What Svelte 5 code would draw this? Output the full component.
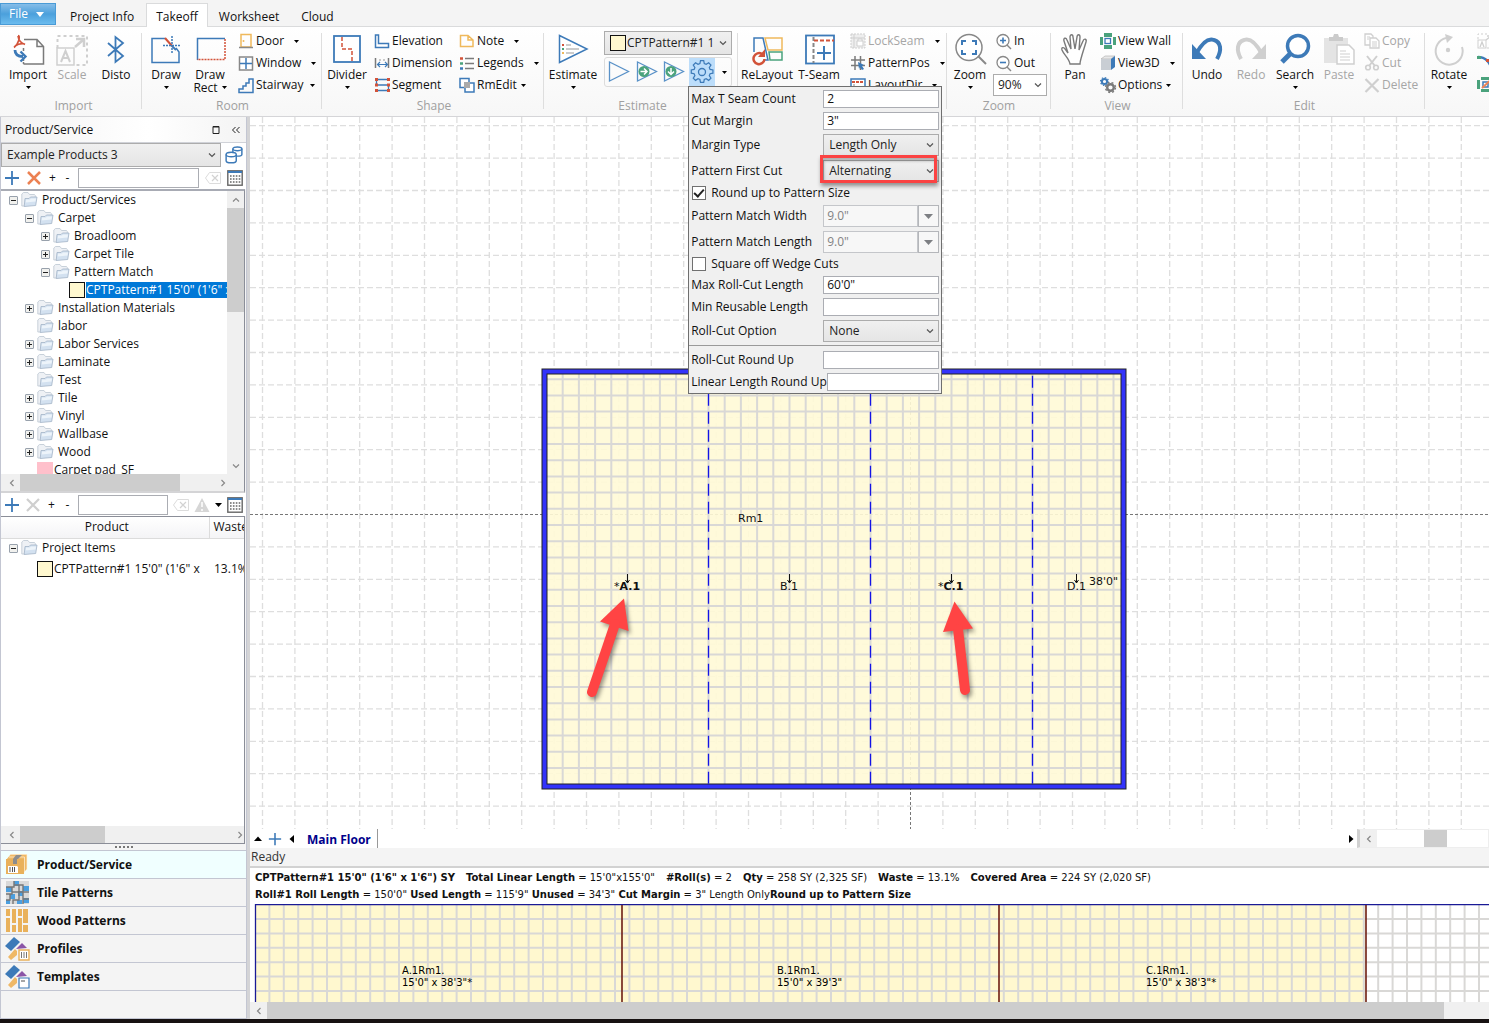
<script>
  const tabs = ['Project Info', 'Takeoff', 'Worksheet', 'Cloud'];

  const B = '#3d7ab8';
  const R = '#d2533a';
  const G = '#4aa27c';
  const O = '#efb95c';
  const K = '#7a7a7a';
  const L = '#cfcfcf';

  const icons = {
    import: `<path d="M12 5.500H25l6.500 7V30H11.500M25 5.500v7h6.500" fill="#fff" stroke="${K}" stroke-width="1.500"/><path d="M11.500 14v3M11.500 24v6" stroke="${K}" stroke-width="1.500" stroke-dasharray="3 1"/><path d="M6 1.500c1.500 0 1.500 2 .7 5S4.500 11.500 2 13.500M6 2c.5 4 3 7 7 8.500M3 12c3-2 6-3 10-2" fill="none" stroke="${R}" stroke-width="1.700"/><path d="M3 16c0 5 3 6.500 8 6.500" fill="none" stroke="${B}" stroke-width="2.800"/><path d="M8.500 17.500l5 5-5 5" fill="none" stroke="${B}" stroke-width="2.400"/>`,
    scale: `<path d="M1.500 14V2H31v29H20" fill="none" stroke="${L}" stroke-width="2" stroke-dasharray="3 3"/><rect x="1" y="14" width="17" height="17" fill="none" stroke="${L}" stroke-width="1.500"/><path d="M5 28l4.500-11L14 28M6.500 24h6" fill="none" stroke="${L}" stroke-width="2"/><path d="M19 13l8-7M20 5h8v8" fill="none" stroke="${L}" stroke-width="2.500"/>`,
    disto: `<path d="M8 9l15 13-7.500 6V3l7.500 6L8 22" fill="none" stroke="${B}" stroke-width="1.800"/>`,
    draw: `<path d="M15 4.500H2v24h27V18l-3-4" fill="none" stroke="${B}" stroke-width="1.500"/><path d="M15 4l7 8" stroke="${R}" stroke-width="2"/><path d="M22 12l4 4" stroke="${B}" stroke-width="2"/><path d="M22 2v18M13 11.500h18" stroke="${B}" stroke-width="1.500" stroke-dasharray="2 1"/>`,
    drawrect: `<path d="M31 4.500H3.500V26" fill="none" stroke="${B}" stroke-width="1.500"/><path d="M31 5v20.500H3" fill="none" stroke="${R}" stroke-width="1.500" stroke-dasharray="2 1"/>`,
    divider: `<rect x="3" y="2" width="26" height="26" fill="#fff" stroke="${B}" stroke-width="1.800"/><path d="M11 3v12h10v13" fill="none" stroke="${R}" stroke-width="1.500" stroke-dasharray="4 2"/>`,
    estimate: `<path d="M2.500 1.500v27L30 15z" fill="#fff" stroke="${B}" stroke-width="1.500"/><path d="M9 11h5M9 15h13M9 19h8" stroke="#999" stroke-width="1.200"/><path d="M5 11h2" stroke="${R}" stroke-width="2"/><path d="M5 15h2" stroke="${G}" stroke-width="2"/><path d="M5 19h2" stroke="${O}" stroke-width="2"/>`,
    relayout: `<path d="M3 18V4h9l5 22h-3" fill="none" stroke="${B}" stroke-width="1.500"/><path d="M14 4h17v12H17z" fill="none" stroke="${O}" stroke-width="1.500"/><path d="M18 18h13v8H19z" fill="none" stroke="${G}" stroke-width="1.500"/><path d="M11 20a5.500 5.500 0 1 0 2.500 5" fill="none" stroke="${R}" stroke-width="2.500"/><path d="M14 15v8H7z" fill="${R}"/>`,
    tseam: `<rect x="3" y="1.500" width="28" height="28" fill="#fff" stroke="${B}" stroke-width="1.800"/><path d="M10.500 3v26" stroke="#888" stroke-width="2" stroke-dasharray="4 2"/><path d="M11 6.500h20" stroke="${R}" stroke-width="2" stroke-dasharray="4 2"/><path d="M21 12v14M14 19h14" stroke="${B}" stroke-width="2"/>`,
    zoom: `<circle cx="15" cy="13.500" r="13" fill="#fff" stroke="#888" stroke-width="1.500"/><path d="M24 22l8 8" stroke="#888" stroke-width="2"/><path d="M8 11V7h4M18 7h4v4M22 16v4h-4M12 20H8v-4" fill="none" stroke="${B}" stroke-width="2"/>`,
    pan: `<path d="M11 30c-1-6-6-9-8-14-1-3 2-3 3-1l3 4L5 7c-1-3 2-4 3-1l4 9-1-12c0-3 3-3 3 0l2 12 2-12c0-3 3-3 3 0l-1 13 4-9c1-3 4-2 3 1l-4 13c-1 4-2 6-2 9z" fill="#fff" stroke="${K}" stroke-width="1.400"/>`,
    undo: `<path d="M5 20C12 7 18 4 23 6c7 2 8 10 3 19" fill="none" stroke="${B}" stroke-width="4"/><path d="M1 10v15h14z" fill="${B}"/>`,
    redo: `<path d="M27 20C20 7 14 4 9 6c-7 2-8 10-3 19" fill="none" stroke="${L}" stroke-width="4"/><path d="M31 10v15H17z" fill="${L}"/>`,
    search: `<circle cx="19" cy="12" r="10.500" fill="#fff" stroke="${B}" stroke-width="3.500"/><path d="M11 20l-8 8" stroke="${B}" stroke-width="5"/>`,
    paste: `<path d="M1 4h24v25H1z" fill="#e4e4e4"/><path d="M6 7V3h4l1-3h4l1 3h4v4z" fill="#cbcbcb"/><path d="M14 11h12l5 5v14H14z" fill="#fff" stroke="${L}" stroke-width="1.500"/><path d="M17 17h6M17 20h10M17 23h10M17 26h10" stroke="${L}"/>`,
    rotate: `<path d="M13 4a13.500 13.500 0 1 0 16 9" fill="none" stroke="${L}" stroke-width="2"/><path d="M12 0l8 3-6 6z" fill="${L}"/><circle cx="15" cy="16" r="2.200" fill="${L}"/>`,
    door: `<path d="M3 1.500h10V14H3z" fill="none" stroke="${O}" stroke-width="1.500"/><path d="M1 14.500h14" stroke="#888" stroke-width="1.500"/><circle cx="5.500" cy="8" r="1" fill="${O}"/>`,
    window: `<rect x="1.500" y="2" width="13" height="13" fill="#fff" stroke="#888" stroke-width="1.500"/><path d="M8 3v11M2 8.500h12" stroke="${B}" stroke-width="1.500"/>`,
    stairway: `<path d="M1 15.500V12h4V9h3V6h3V2h4v13.500z" fill="none" stroke="${B}" stroke-width="1.500"/>`,
    elevation: `<path d="M1.500 2h3v8.500h10v4h-13z" fill="#fff" stroke="${B}" stroke-width="1.500"/>`,
    dimension: `<path d="M1.500 3v10M14.500 3v10" stroke="${K}" stroke-width="1.500"/><path d="M4 9.500h9M6 7l-2.500 2.500L6 12M11 7l2.500 2.500L11 12" fill="none" stroke="${B}" stroke-width="1.200"/><path d="M5 5h2M9 5h2" stroke="#999"/>`,
    segment: `<path d="M14.500 2.500H2.500v5.500h12v5.500H1" fill="none" stroke="${B}" stroke-width="1.300"/><path d="M1 1h3v3H1zM13 1h3v3h-3zM1 6.500h3v3H1zM13 6.500h3v3h-3zM1 12h3v3H1zM13 12h3v3h-3z" fill="${R}"/>`,
    note: `<path d="M1.500 2.500H9l5 4.500v6.500H1.500zM9 2.500V7h5" fill="none" stroke="${O}" stroke-width="1.500"/>`,
    legends: `<path d="M6 3.500h9M6 8.500h9M6 13.500h9" stroke="${K}" stroke-width="1.500"/><path d="M1 3.500h3" stroke="${R}" stroke-width="2.500"/><path d="M1 8.500h3" stroke="${G}" stroke-width="2.500"/><path d="M1 13.500h3" stroke="${B}" stroke-width="2.500"/>`,
    rmedit: `<rect x="1" y="1.500" width="9" height="9" fill="#fff" stroke="${B}" stroke-width="1.500"/><rect x="6" y="6" width="9" height="9" fill="#fff" stroke="${B}" stroke-width="1.500"/><rect x="5" y="5" width="6" height="6" fill="#aaa"/>`,
    lockseam: `<path d="M1 1h14v14H1z" fill="#eee" stroke="${L}" stroke-dasharray="2 1"/><path d="M4 1v14M1 5h14" stroke="${L}"/><path d="M7 8h6v5H7zM8 8V6h4v2" fill="#fff" stroke="${L}"/>`,
    patternpos: `<path d="M5 1v14M10.500 1v14M1 5h14M1 10.500h14" stroke="${K}" stroke-width="1.500"/><path d="M8 7l6 3-2 1 2 3-2 1-2-3-1 2z" fill="${B}"/>`,
    layoutdir: `<rect x="1" y="2" width="14" height="13" fill="#fff" stroke="${B}" stroke-width="1.500"/><path d="M2 5h12" stroke="${R}" stroke-width="2" stroke-dasharray="3 1"/><path d="M4 7v8" stroke="#888" stroke-dasharray="2 1"/>`,
    zin: `<circle cx="7" cy="7.500" r="6" fill="#fff" stroke="#888" stroke-width="1.300"/><path d="M11 12l4 4" stroke="#888" stroke-width="1.500"/><path d="M4 7.500h6M7 4.500v6" stroke="${B}" stroke-width="1.600"/>`,
    zout: `<circle cx="7" cy="7.500" r="6" fill="#fff" stroke="#888" stroke-width="1.300"/><path d="M11 12l4 4" stroke="#888" stroke-width="1.500"/><path d="M4 7.500h6" stroke="${B}" stroke-width="1.600"/>`,
    viewwall: `<path d="M4 0h8v4H4zM4 12h8v4H4zM0 4h3v8H0zM13 4h3v8h-3z" fill="${G}"/><rect x="5" y="5.500" width="5.500" height="5" fill="#fff" stroke="${B}" stroke-width="1.300"/>`,
    view3d: `<path d="M1 4l4-3h10l-4 3z" fill="#e8e8e8" stroke="#aaa" stroke-width=".6"/><path d="M1 4h10v11H1z" fill="#c9ced4"/><path d="M11 4l4-3v11l-4 3z" fill="${B}"/>`,
    options: `<circle cx="4.500" cy="4.500" r="2.600" fill="none" stroke="${B}" stroke-width="2"/><circle cx="4.500" cy="4.500" r="4" fill="none" stroke="${B}" stroke-width="1.200" stroke-dasharray="1.500 1.600"/><circle cx="10.500" cy="10.500" r="3.300" fill="none" stroke="${K}" stroke-width="2.400"/><circle cx="10.500" cy="10.500" r="5" fill="none" stroke="${K}" stroke-width="1.400" stroke-dasharray="2 2"/>`,
    copy: `<path d="M1 1h6l2 2v9H1z" fill="#fff" stroke="${L}" stroke-width="1.300"/><path d="M6 5h6l3 3v7H6z" fill="#fff" stroke="${L}" stroke-width="1.300"/><path d="M8 9h5M8 11h5M8 13h5M3 4h3M3 6h2" stroke="${L}"/>`,
    cut: `<path d="M3 1l8 10M13 1L5 11" stroke="${L}" stroke-width="2"/><circle cx="4" cy="12.500" r="2.300" fill="none" stroke="${L}" stroke-width="1.600"/><circle cx="12" cy="12.500" r="2.300" fill="none" stroke="${L}" stroke-width="1.600"/>`,
    del: `<path d="M1.500 2l13 13M14.500 2l-13 13" stroke="${L}" stroke-width="2.200"/>`,
    resize: `<path d="M1 6V1h14v14h-5" fill="none" stroke="${L}" stroke-dasharray="2 2"/><rect x="1" y="7" width="8" height="8" fill="#fff" stroke="${L}"/><path d="M3 14l2-5 2 5M9 7l5-4M10 3h4v4" fill="none" stroke="${L}" stroke-width="1.300"/>`,
    arc: `<path d="M1 2c7 0 13 5 13 13" fill="none" stroke="${B}" stroke-width="2.500"/><path d="M0 1h4v3H0z" fill="${G}"/><path d="M9 4h3v3H9z" fill="${R}"/>`,
    wallcut: `<path d="M4 0h8v3H4zM4 12h8v3H4zM0 3h3v9H0z" fill="${G}"/><rect x="6" y="5" width="5" height="5" fill="#fff" stroke="${B}" stroke-width="1.500"/><path d="M5 11L15 2" stroke="#ef8354" stroke-width="2"/>`,
    folder: `<path d="M.8 14V2l1.700-1.500h4.500L8.500 2.500h5l.8 1V6L4 14z" fill="#eef1f5" stroke="#bcc6d2" stroke-width=".8"/><path d="M4 6.500h4L9.500 5H16l-1.300 8.500-11.500 1z" fill="#d3e1f0" stroke="#a3b4c7" stroke-width=".8"/><path d="M5 7.500h4l1-1h5l-.5 3C11 10 8 10 4.700 10.500z" fill="#edf4fa"/>`,
    plus: `<path d="M8 1v14M1 8h14" stroke="${B}" stroke-width="1.800"/>`,
    cross: `<path d="M2 2l12 12M14 2L2 14" stroke="#ec8152" stroke-width="2.500"/>`,
    crossoff: `<path d="M2 2l12 12M14 2L2 14" stroke="${L}" stroke-width="2.200"/>`,
    clear: `<path d="M.5 8l4-5.500h11v11h-11z" fill="none" stroke="#dcdcdc"/><path d="M7 5l6 6M13 5l-6 6" stroke="#d2d2d2" stroke-width="1.200"/>`,
    grid: `<rect x=".8" y=".8" width="14.400" height="14.400" fill="#fff" stroke="#666" stroke-width="1.400"/><path d="M1 2h14" stroke="${B}" stroke-width="2"/><path d="M3 6h10.500M3 9h10.500M3 12h10.500" stroke="#666" stroke-width="1.600" stroke-dasharray="1.600 1.300"/>`,
    warn: `<path d="M8 1l7.500 14H.5z" fill="#d6d6d6"/><path d="M8 5v5M8 12v2" stroke="#fff" stroke-width="1.500"/>`,
    products: `<path d="M7 2.500v5c0 2 8 2 8 0v-5" fill="#fff" stroke="${B}" stroke-width="1.300"/><ellipse cx="11" cy="2.500" rx="4" ry="1.700" fill="#fff" stroke="${B}" stroke-width="1.300"/><path d="M1 7.500v5.500c0 2.500 9 2.500 9 0V7.500" fill="#fff" stroke="${B}" stroke-width="1.300"/><ellipse cx="5.500" cy="7.500" rx="4.500" ry="2" fill="#fff" stroke="${B}" stroke-width="1.300"/>`,
    gear: `<circle cx="12" cy="12" r="3.500" fill="none" stroke="${B}" stroke-width="1.300"/><path d="M10.300 1.500h3.400l.6 3 2 .8 2.600-1.700 2.400 2.400-1.700 2.600.8 2 3 .6v3.400l-3 .6-.8 2 1.700 2.600-2.400 2.400-2.600-1.700-2 .8-.6 3h-3.400l-.6-3-2-.8-2.600 1.700-2.400-2.400 1.700-2.600-.8-2-3-.6v-3.400l3-.6.8-2L2.700 6l2.400-2.400 2.600 1.700 2-.8z" fill="none" stroke="${B}" stroke-width="1.300" transform="translate(.7 -.7) scale(.95)"/>`,
    run: `<path d="M2.500 2v19L21.500 11.500z" fill="none" stroke="#5a92c8" stroke-width="1.300"/>`,
    runright: `<path d="M2.500 2v19L21.500 11.500z" fill="none" stroke="#5a92c8" stroke-width="1.300"/><circle cx="9" cy="11.500" r="5.500" fill="${G}"/><path d="M5.500 11.500h6M9 8.500l3 3-3 3" fill="none" stroke="#fff" stroke-width="1.500"/>`,
    rundown: `<path d="M2.500 2v19L21.500 11.500z" fill="none" stroke="#5a92c8" stroke-width="1.300"/><circle cx="9" cy="11.500" r="5.500" fill="${G}"/><path d="M9 8v6M6 11.500l3 3 3-3" fill="none" stroke="#fff" stroke-width="1.500"/>`,
    box: `<path d="M6 1h16v15l-3 3H1V7z" fill="#efb866"/><path d="M5.500 1.500H22V17M4 4h15.500v15.500" fill="none" stroke="#fff3dc" stroke-width=".7"/><rect x="1" y="6" width="18" height="15" fill="#e9b15b"/><path d="M8 6h4v5H8zM11 2h6l-4 4H8z" fill="#8d8d8d"/><path d="M3 13h9l1 1v6H3z" fill="#fff"/><path d="M5 14v5M7.500 14v5M9.500 14v5" stroke="#555"/>`,
    tiles: `<rect width="23" height="23" x="1" fill="#d9d9d9"/><path d="M1 6h6v5H1zM9 0h5v5H9zM18 5h6v5h-6zM13 10h5v5h-5zM5 13h5v5H5zM18 17h6v5h-6zM12 19h5v4h-5zM1 19h4v4H1z" fill="#4b9fe0"/><path d="M1 6h8V0M9 4h9v7h6M7 6v7H1M7 11h7v-7M14 11h4v7h6M14 11v8H8v4M5 13v6H1M18 18v5" fill="none" stroke="#777" stroke-width="1.400"/>`,
    wood: `<path d="M1 0h4v7H1zM1 9h4v14H1zM7 0h4v14H7zM7 16h4v7H7zM13 0h4v7h-4zM13 9h4v14h-4zM18 0h5v14h-5zM18 16h5v7h-5z" fill="#e9b15b"/>`,
    profiles: `<path d="M0 9L9 0l6 5-9 9z" fill="${B}"/><path d="M11 12l6-6 5 5z" fill="#8b55a6"/><path d="M3 20l7-8 2 2v4l-6 5z" fill="#efb866"/><path d="M14 13h10v10H14z" fill="#fff" stroke="#e9b15b" stroke-width="1.400"/><path d="M16.500 15v6M19 15v6M21.500 15v6" stroke="#777"/>`,
    templates: `<path d="M0 9L9 0l6 5-9 9z" fill="${B}"/><path d="M11 12l6-6 5 5z" fill="#8b55a6"/><path d="M3 20l7-8 2 2v4l-6 5z" fill="#efb866"/><path d="M14 13h10v10H14z" fill="#fff" stroke="${B}" stroke-width="1.200"/><path d="M16 16h4" stroke="#888" stroke-width="1.500"/>`
  };

  const tree = [
    { level: 0, open: true, text: 'Product/Services' },
    { level: 1, open: true, text: 'Carpet' },
    { level: 2, open: false, text: 'Broadloom' },
    { level: 2, open: false, text: 'Carpet Tile' },
    { level: 2, open: true, text: 'Pattern Match' },
    { level: 3, item: 'cream', selected: true, text: `CPTPattern#1 15'0" (1'6" x` },
    { level: 1, open: false, text: 'Installation Materials' },
    { level: 1, text: 'labor' },
    { level: 1, open: false, text: 'Labor Services' },
    { level: 1, open: false, text: 'Laminate' },
    { level: 1, text: 'Test' },
    { level: 1, open: false, text: 'Tile' },
    { level: 1, open: false, text: 'Vinyl' },
    { level: 1, open: false, text: 'Wallbase' },
    { level: 1, open: false, text: 'Wood' },
    { level: 1, item: 'pink', text: 'Carpet pad_SF' }
  ];

  const nav = [
    { icon: 'box', text: 'Product/Service' },
    { icon: 'tiles', text: 'Tile Patterns' },
    { icon: 'wood', text: 'Wood Patterns' },
    { icon: 'profiles', text: 'Profiles' },
    { icon: 'templates', text: 'Templates' }
  ];

  const fields = [
    { id: 'seams', label: 'Max T Seam Count', kind: 'text', value: '2' },
    { id: 'margin', label: 'Cut Margin', kind: 'text', value: '3"' },
    { id: 'mtype', label: 'Margin Type', kind: 'select', value: 'Length Only' },
    { id: 'first', label: 'Pattern First Cut', kind: 'select', value: 'Alternating', marked: true },
    { id: 'round', label: 'Round up to Pattern Size', kind: 'check', value: true },
    { id: 'mwidth', label: 'Pattern Match Width', kind: 'combo', value: '9.0"' },
    { id: 'mlength', label: 'Pattern Match Length', kind: 'combo', value: '9.0"' },
    { id: 'wedge', label: 'Square off Wedge Cuts', kind: 'check', value: false },
    { id: 'maxroll', label: 'Max Roll-Cut Length', kind: 'text', value: `60'0"` },
    { id: 'reuse', label: 'Min Reusable Length', kind: 'text', value: '' },
    { id: 'option', label: 'Roll-Cut Option', kind: 'select', value: 'None' },
    { kind: 'rule' },
    { id: 'rollup', label: 'Roll-Cut Round Up', kind: 'text', value: '' },
    { id: 'linup', label: 'Linear Length Round Up', kind: 'text', value: '' }
  ];

  const range = (n) => Array.from({ length: n }, (_, i) => i);
  // Canvas grid pitch, in drawing units, and the position of its origin axes.
  const pitch = 32.4;
  const axisX = 660.5;
  const axisY = 397.5;
  const seams = [458.5, 620.5, 782.5];
  const cuts = [
    { x: 152, name: 'A.1Rm1.', size: `15'0" x 38'3"*` },
    { x: 527, name: 'B.1Rm1.', size: `15'0" x 39'3"` },
    { x: 896, name: 'C.1Rm1.', size: `15'0" x 38'3"*` }
  ];
</script>

{#snippet icon(name, size, box)}
  <svg class="ic" width={size} height={size} viewBox="0 0 {box ?? size} {box ?? size}" aria-hidden="true">{@html icons[name]}</svg>
{/snippet}

{#snippet caret()}
  <svg class="ic" width="5" height="3" viewBox="0 0 5 3" aria-hidden="true"><path d="M0 0h5L2.500 3z" /></svg>
{/snippet}

{#snippet chevron(dir)}
  <svg class="ic chev {dir}" width="8" height="8" viewBox="0 0 8 8" aria-hidden="true"><path d="M1 2.500l3 3 3-3" fill="none" stroke="currentColor" stroke-width="1.200" /></svg>
{/snippet}

{#snippet big(name, label, drop, off)}
  <button class="big" disabled={off}>
    {@render icon(name, 32)}
    <span>{label}</span>
    {#if drop}<span class="dr">{@render caret()}</span>{/if}
  </button>
{/snippet}

{#snippet small(name, label, drop, off)}
  <button class="small" disabled={off}>
    {@render icon(name, 16)}
    <span>{label}</span>
    {#if drop}<span class="sdr {drop}">{@render caret()}</span>{/if}
  </button>
{/snippet}

{#snippet pick(id, value, cls, label)}
  <span class="pick {cls}">
    <select {id} aria-label={label}><option>{value}</option></select>
    {@render chevron('down')}
  </span>
{/snippet}

<div class="app">
  <header>
    <nav class="tabs">
      <button class="file">File <svg class="ic" width="8" height="5" viewBox="0 0 8 5" aria-hidden="true"><path d="M0 0h8L4 5z" fill="#fff" /></svg></button>
      {#each tabs as tab}
        <button class="tab" class:active={tab === 'Takeoff'}>{tab}</button>
      {/each}
    </nav>

    <div class="ribbon">
      <section class="group g-import">
        <div class="tools">
          {@render big('import', 'Import', true)}
          {@render big('scale', 'Scale', false, true)}
          {@render big('disto', 'Disto')}
        </div>
        <h2>Import</h2>
      </section>
      <section class="group g-room">
        <div class="tools">
          {@render big('draw', 'Draw', true)}
          <button class="big">
            {@render icon('drawrect', 32)}
            <span>Draw</span>
            <span class="rect">Rect {@render caret()}</span>
          </button>
          <div class="stack">
            {@render small('door', 'Door', 'wide')}
            {@render small('window', 'Window', 'wide')}
            {@render small('stairway', 'Stairway', 'mid')}
          </div>
        </div>
        <h2>Room</h2>
      </section>
      <section class="group g-shape">
        <div class="tools">
          {@render big('divider', 'Divider', true)}
          <div class="stack col1">
            {@render small('elevation', 'Elevation')}
            {@render small('dimension', 'Dimension')}
            {@render small('segment', 'Segment')}
          </div>
          <div class="stack">
            {@render small('note', 'Note', 'wide')}
            {@render small('legends', 'Legends', 'wide')}
            {@render small('rmedit', 'RmEdit', 'tight')}
          </div>
        </div>
        <h2>Shape</h2>
      </section>
      <section class="group g-estimate">
        <div class="tools">
          {@render big('estimate', 'Estimate', true)}
          <div class="runs">
            <span class="product">
              <i class="swatch cream"></i>
              {@render pick('product', 'CPTPattern#1 15\'0"', 'prod', 'Product')}
            </span>
            <div class="runbar">
              <button class="go" aria-label="Run">{@render icon('run', 24)}</button>
              <button class="go" aria-label="Run next">{@render icon('runright', 24)}</button>
              <button class="go" aria-label="Run down">{@render icon('rundown', 24)}</button>
              <span class="anchor">
                <button class="go on" aria-label="Estimate settings">{@render icon('gear', 24)}</button>
                <form class="popup">
                  {#each fields as f}
                    {#if f.kind === 'rule'}
                      <hr />
                    {:else if f.kind === 'check'}
                      <label class="frow check"><input type="checkbox" checked={f.value} /> {f.label}</label>
                    {:else}
                      <div class="frow" class:tall={f.kind !== 'text'}>
                        <label for={f.id}>{f.label}</label>
                        {#if f.kind === 'text'}
                          <input class="box" id={f.id} type="text" value={f.value} />
                        {:else if f.kind === 'select'}
                          <span class="marker" class:marked={f.marked}>{@render pick(f.id, f.value, 'opt')}</span>
                        {:else}
                          <span class="combo">
                            <input id={f.id} type="text" value={f.value} disabled />
                            <button type="button" disabled aria-label="Open {f.label}"><svg class="ic" width="9" height="5" viewBox="0 0 9 5" aria-hidden="true"><path d="M0 0h9L4.500 5z" fill="#7d7f83" /></svg></button>
                          </span>
                        {/if}
                      </div>
                    {/if}
                  {/each}
                </form>
              </span>
              <button class="go more" aria-label="More">{@render caret()}</button>
            </div>
          </div>
        </div>
        <h2>Estimate</h2>
      </section>
      <section class="group g-layout">
        <div class="tools">
          {@render big('relayout', 'ReLayout')}
          {@render big('tseam', 'T-Seam')}
          <div class="stack">
            {@render small('lockseam', 'LockSeam', 'wide', true)}
            {@render small('patternpos', 'PatternPos', 'wide')}
            {@render small('layoutdir', 'LayoutDir', 'wide')}
          </div>
        </div>
      </section>
      <section class="group g-zoom">
        <div class="tools">
          {@render big('zoom', 'Zoom', true)}
          <div class="stack">
            {@render small('zin', 'In')}
            {@render small('zout', 'Out')}
            {@render pick('zoomlevel', '90%', 'white', 'Zoom level')}
          </div>
        </div>
        <h2>Zoom</h2>
      </section>
      <section class="group g-view">
        <div class="tools">
          {@render big('pan', 'Pan')}
          <div class="stack">
            {@render small('viewwall', 'View Wall')}
            {@render small('view3d', 'View3D', 'wide')}
            {@render small('options', 'Options', 'tight')}
          </div>
        </div>
        <h2>View</h2>
      </section>
      <section class="group g-edit">
        <div class="tools">
          {@render big('undo', 'Undo')}
          {@render big('redo', 'Redo', false, true)}
          {@render big('search', 'Search', true)}
          {@render big('paste', 'Paste', false, true)}
          <div class="stack">
            {@render small('copy', 'Copy', '', true)}
            {@render small('cut', 'Cut', '', true)}
            {@render small('del', 'Delete', '', true)}
          </div>
        </div>
        <h2>Edit</h2>
      </section>
      <section class="group g-rotate">
        <div class="tools">
          {@render big('rotate', 'Rotate', true)}
          <div class="stack">
            {@render small('resize', '', '', true)}
            {@render small('arc', '')}
            {@render small('wallcut', '')}
          </div>
        </div>
      </section>
    </div>
  </header>

  <main>
    <aside>
      <div class="title">
        <h1>Product/Service</h1>
        <button aria-label="Float panel"><svg class="ic" width="8" height="8" viewBox="0 0 8 8" aria-hidden="true"><path d="M1 .5h6v7H1zM1 1h6" fill="none" stroke="#222" /></svg></button>
        <button aria-label="Collapse panel"><svg class="ic" width="8" height="8" viewBox="0 0 8 8" aria-hidden="true"><path d="M3.500 1l-3 3 3 3M7.500 1l-3 3 3 3" fill="none" stroke="#222" /></svg></button>
      </div>
      <div class="catalog">
        {@render pick('catalog', 'Example Products 3', 'cat', 'Catalog')}
        <button aria-label="Catalogs">{@render icon('products', 18, 16)}</button>
      </div>
      <div class="bar">
        <button aria-label="Add">{@render icon('plus', 16)}</button>
        <button aria-label="Remove">{@render icon('cross', 16)}</button>
        <button class="sign">+</button>
        <button class="sign">-</button>
        <input type="text" aria-label="Filter products" />
        <button aria-label="Clear filter" disabled>{@render icon('clear', 16)}</button>
        <button aria-label="Columns">{@render icon('grid', 16)}</button>
      </div>

      <div class="treebox">
        <div class="treerow">
          <ul class="tree">
            {#each tree as node}
              <li class="lv{node.level}" class:leaf={node.item}>
                {#if !node.item}
                  {#if node.open !== undefined}
                    <button class="exp" class:closed={!node.open} aria-label="Toggle {node.text}"></button>
                  {:else}
                    <i class="noexp"></i>
                  {/if}
                  {@render icon('folder', 16)}
                {:else}
                  <i class="swatch {node.item}"></i>
                {/if}
                <span class:selected={node.selected}>{node.text}</span>
              </li>
            {/each}
          </ul>
          <div class="vbar">
            <button aria-label="Scroll up">{@render chevron('up')}</button>
            <i class="thumb"></i>
            <button aria-label="Scroll down">{@render chevron('down')}</button>
          </div>
        </div>
        <div class="hbar tb">
          <button aria-label="Scroll left">{@render chevron('left')}</button>
          <i class="thumb"></i>
          <button aria-label="Scroll right">{@render chevron('right')}</button>
        </div>
      </div>

      <div class="bar lower">
        <button aria-label="Add item">{@render icon('plus', 16)}</button>
        <button aria-label="Remove item" disabled>{@render icon('crossoff', 16)}</button>
        <button class="sign">+</button>
        <button class="sign">-</button>
        <input type="text" aria-label="Filter items" />
        <button aria-label="Clear item filter" disabled>{@render icon('clear', 16)}</button>
        <button aria-label="Warnings" disabled>{@render icon('warn', 16)}</button>
        <button aria-label="Warning options"><svg class="ic" width="7" height="4" viewBox="0 0 7 4" aria-hidden="true"><path d="M0 0h7L3.500 4z" /></svg></button>
        <button aria-label="Item columns">{@render icon('grid', 16)}</button>
      </div>

      <div class="items">
        <table>
          <thead><tr><th class="c1">Product</th><th>Waste</th></tr></thead>
          <tbody>
            <tr>
              <td colspan="2"><span class="cell root"><button class="exp" aria-label="Toggle Project Items"></button>{@render icon('folder', 16)}<span>Project Items</span></span></td>
            </tr>
            <tr class="item">
              <td class="c1"><span class="cell sub"><i class="swatch cream"></i><span>CPTPattern#1 15'0" (1'6" x 1</span></span></td>
              <td class="pct">13.1%</td>
            </tr>
          </tbody>
        </table>
        <div class="hbar ib">
          <button aria-label="Scroll items left">{@render chevron('left')}</button>
          <i class="thumb"></i>
          <button aria-label="Scroll items right">{@render chevron('right')}</button>
        </div>
      </div>

      <div class="grip"><i></i><i></i><i></i><i></i><i></i></div>
      <nav class="nav">
        {#each nav as n, i}
          <button class:current={i === 0}>{@render icon(n.icon, 24)}<span>{n.text}</span></button>
        {/each}
      </nav>
    </aside>

    <section class="work">
      <div class="canvas">
        <svg width="100%" height="100%" role="img" aria-label="Floor plan">
          <g class="grid">
            {#each range(60) as i}
              {@const x = axisX + (i - 20) * pitch}
              <line x1={x} x2={x} y1="0" y2="100%" class:axis={i === 20} />
            {/each}
            {#each range(40) as i}
              {@const y = axisY + (i - 12) * pitch}
              <line x1="0" x2="100%" y1={y} y2={y} class:axis={i === 12} />
            {/each}
          </g>
          <rect x="297" y="257" width="574" height="410" fill="#fffad6" fill-opacity=".9" />
          <g class="weave">
            {#each range(35) as i}
              <line x1={312.7 + i * 16.2} x2={312.7 + i * 16.2} y1="257" y2="667" />
            {/each}
            {#each range(25) as i}
              <line x1="297" x2="871" y1={262.2 + i * 16.2} y2={262.2 + i * 16.2} />
            {/each}
          </g>
          <g class="walls">
            <rect x="294.500" y="254.500" width="579" height="415" stroke="#222" stroke-width="6" />
            <rect x="294.500" y="254.500" width="579" height="415" stroke="#3333fa" stroke-width="4" />
          </g>
          {#each seams as x}
            <line class="seam" x1={x} x2={x} y1="258.700" y2="667" />
          {/each}
          <g class="marks">
            <path d="M377.500 457v9M375.500 463l2 3 2-3M539.500 457v9M537.500 463l2 3 2-3M701.500 457v9M699.500 463l2 3 2-3M826.500 457v9M824.500 463l2 3 2-3" />
          </g>
          <g class="names">
            <text x="488" y="405">Rm1</text>
            <text x="364" y="473">*<tspan class="b">A.1</tspan></text>
            <text x="530" y="473">B.1</text>
            <text x="688" y="473">*<tspan class="b">C.1</tspan></text>
            <text x="817" y="473">D.1</text>
            <text x="839" y="468">38'0"</text>
          </g>
          <g class="pointer">
            <path d="M374 481.500l4.500 32.500-28.500-9.500z" />
            <line x1="365" y1="507" x2="342" y2="575" />
            <path d="M704.500 484.500l18.500 27-30 3.500z" />
            <line x1="708" y1="512" x2="715" y2="573" />
          </g>
        </svg>
      </div>

      <div class="floors">
        <button aria-label="Floors up"><svg class="ic" width="8" height="5" viewBox="0 0 8 5" aria-hidden="true"><path d="M0 5h8L4 .5z" /></svg></button>
        <button aria-label="Add floor">{@render icon('plus', 14, 16)}</button>
        <button aria-label="Previous floor"><svg class="ic" width="5" height="8" viewBox="0 0 5 8" aria-hidden="true"><path d="M5 0v8L.5 4z" /></svg></button>
        <button class="floor">Main Floor</button>
        <div class="right">
          <button aria-label="Next floor"><svg class="ic" width="5" height="8" viewBox="0 0 5 8" aria-hidden="true"><path d="M0 0v8l4.500-4z" /></svg></button>
          <div class="hbar cb">
            <button aria-label="Scroll plan left">{@render chevron('left')}</button>
            <i class="thumb"></i>
          </div>
        </div>
      </div>

      <div class="status">Ready</div>

      <div class="roll">
        <p class="totals">
          <span><b>CPTPattern#1 15'0" (1'6" x 1'6") SY</b></span>
          <span><b>Total Linear Length</b> = 15'0"x155'0"</span>
          <span><b>#Roll(s)</b> = 2</span>
          <span><b>Qty</b> = 258 SY (2,325 SF)</span>
          <span><b>Waste</b> = 13.1%</span>
          <span><b>Covered Area</b> = 224 SY (2,020 SF)</span>
        </p>
        <p><b>Roll#1 Roll Length</b> = 150'0" <b>Used Length</b> = 115'9" <b>Unused</b> = 34'3" <b>Cut Margin</b> = 3" Length Only<b>Round up to Pattern Size</b></p>
        <svg class="strip" width="100%" role="img" aria-label="Roll cuts">
          <rect x="5" y="0" width="1111" height="100%" fill="#fff8cf" />
          <g class="weave">
            {#each range(120) as i}
              <line x1={19.4 + i * 14.4} x2={19.4 + i * 14.4} y1="0" y2="100%" />
            {/each}
            {#each range(6) as i}
              <line x1="5" x2="100%" y1={15 + i * 14.4} y2={15 + i * 14.4} />
            {/each}
          </g>
          <path d="M5.500 200V.5H9000" fill="none" stroke="#1a1a96" stroke-width="1.300" />
          <path d="M372 1v200M749 1v200M1116 1v200" stroke="#6e1f14" stroke-width="1.600" />
          {#each cuts as c}
            <text x={c.x} y="70">{c.name}</text>
            <text x={c.x} y="82">{c.size}</text>
          {/each}
        </svg>
        <div class="hbar rb">
          <button aria-label="Scroll roll left">{@render chevron('left')}</button>
          <i class="thumb"></i>
        </div>
      </div>
    </section>
  </main>
  <footer></footer>
</div>

<style>
  :global(body) { overflow: hidden; }
  .app {
    height: 100vh;
    display: flex;
    flex-direction: column;
    overflow: hidden;
    font: 12px/18px "Open Sans", "Noto Sans", sans-serif;
    color: #111;
    background: #d4d4d6;
  }
  .app :global(*) { box-sizing: border-box; }
  button, input, select { font: inherit; color: inherit; margin: 0; padding: 0; border: 0; background: none; border-radius: 0; outline: 0; }
  h1, h2, p, ul { margin: 0; padding: 0; font: inherit; list-style: none; }
  .ic { display: block; flex: none; overflow: visible; }
  .chev.up { transform: rotate(180deg); }
  .chev.left { transform: rotate(90deg); }
  .chev.right { transform: rotate(-90deg); }

  header { flex: none; background: #f4f4f4; }
  .tabs { display: flex; height: 27px; align-items: flex-end; border-bottom: 1px solid #dadbdc; padding-top: 3px; }
  .file { align-self: flex-start; width: 56px; height: 22px; color: #fff; display: flex; align-items: center; gap: 8px; padding-left: 8px; border: 1px solid #4a9bd6; background: linear-gradient(#86bde8, #4ba0dc 50%, #6cbcee); }
  .tab { height: 24px; padding: 2px 10px 0; margin-bottom: -1px; border: 1px solid transparent; border-bottom: 0; }
  .file + .tab { margin-left: 3px; }
  .tab.active { background: #fff; border-color: #dadbdc; padding: 2px 9px 0; margin-left: 1px; }

  .ribbon { display: flex; height: 90px; background: linear-gradient(#fff, #f7f7f7); border-bottom: 1px solid #d5d5d8; padding: 3px 0 0; }
  .group { position: relative; flex: none; border-right: 1px solid #dedede; display: flex; flex-direction: column; margin: 3px 0 7px; }
  .group h2 { flex: none; color: #a0a0a0; text-align: center; line-height: 20px; }
  .tools { display: flex; flex: none; height: 66px; margin-top: -3px; }
  .g-import { width: 142px; padding-left: 6px; }
  .g-room { width: 180px; padding-left: 2px; }
  .g-shape { width: 222px; padding-left: 3px; }
  .g-estimate { width: 194px; padding-left: 4px; }
  .g-layout { width: 209px; padding-left: 3px; }
  .g-zoom { width: 104px; padding-left: 1px; }
  .g-view { width: 132px; padding-left: 2px; }
  .g-edit { width: 242px; padding-left: 2px; }
  .g-rotate { flex: 1 1 0; min-width: 0; padding-left: 2px; border: 0; }
  .big { width: 44px; flex: none; display: flex; flex-direction: column; align-items: center; padding-top: 4px; line-height: 13px; white-space: nowrap; }
  .big :global(svg + span) { padding-top: 2px; }
  .g-estimate .big { width: 50px; }
  .g-layout .big { width: 52px; }
  .big:disabled, .small:disabled { color: #a6a6a6; }
  .dr { height: 13px; display: flex; align-items: center; }
  .rect { display: flex; align-items: center; gap: 4px; }
  .stack { display: flex; flex-direction: column; align-items: flex-start; padding-left: 6px; }
  .g-shape .stack, .g-layout .stack { padding-left: 5px; }
  .col1 { width: 90px; }
  .g-shape .col1 + .stack { padding-left: 0; }
  .g-view .stack, .g-edit .stack { padding-left: 3px; }
  .g-zoom .stack { padding-left: 1px; }
  .g-zoom .small { padding-left: 3px; }
  .small { height: 22px; display: flex; align-items: center; gap: 2px; white-space: nowrap; }
  .sdr.wide { padding-left: 8px; }
  .sdr.mid { padding-left: 5px; }
  .sdr.tight { padding-left: 2px; }

  .pick { display: grid; align-items: center; height: 22px; color: #222; }
  .pick > * { grid-area: 1 / 1; }
  .pick > .ic { justify-self: end; margin-right: 5px; pointer-events: none; color: #555; }
  .pick select { appearance: none; width: 100%; height: 100%; border: 1px solid #acacac; background: linear-gradient(#f0f0f0, #e5e5e5); padding: 0 20px 0 5px; text-overflow: clip; }
  .pick.white { width: 54px; }
  .pick.white select { background: #fff; padding-left: 4px; padding-right: 14px; }
  .runs { margin-left: 6px; padding-top: 1px; width: 128px; }
  .product { position: relative; display: block; }
  .pick.prod { height: 24px; margin-bottom: 2px; }
  .pick.prod select { padding-left: 22px; padding-right: 18px; }
  .swatch { display: block; flex: none; width: 16px; height: 16px; border: 1px solid #111; background: #fff8cf; }
  .swatch.pink { border-color: #ffc0cb; background: #ffc0cb; }
  .product .swatch { position: absolute; left: 6px; top: 4px; z-index: 1; }
  .runbar { display: flex; height: 30px; border: 1px solid #dcdcdc; border-radius: 3px; }
  .go { width: 28px; height: 28px; display: flex; align-items: center; justify-content: center; }
  .anchor { position: relative; z-index: 5; margin-left: 1px; }
  .on { width: 26px; background: #bcddfa; }
  .more { width: 14px; margin-left: 2px; }

  .popup { position: absolute; left: -1px; top: 28px; width: 254px; border: 1px solid #6f6f6f; background: #f0f0f0; padding: 1px 2px 0; }
  .frow { display: flex; align-items: center; justify-content: space-between; height: 22px; white-space: nowrap; }
  .frow.tall { height: 26px; }
  .frow.check { height: 18px; margin-bottom: 1px; justify-content: flex-start; gap: 5px; }
  .frow.check input { appearance: none; width: 14px; height: 14px; margin-left: 1px; border: 1px solid #707070; background: #fff; display: grid; place-items: center; }
  .frow.check input:checked::after { content: ""; width: 8px; height: 4px; border: solid #222; border-width: 0 0 2px 2px; transform: rotate(-48deg); margin-bottom: 3px; }
  .popup .box { flex: 0 1 116px; min-width: 0; height: 18px; border: 1px solid #abadb3; background: #fff; padding: 0 3px; }
  .marker, .combo { width: 116px; position: relative; }
  .marked::after { content: ""; box-sizing: border-box; position: absolute; left: -3px; top: -5px; width: 117px; height: 28px; border: 3px solid #fb4343; box-shadow: 1px 3px 4px #0006, inset 1px 3px 3px #0004; pointer-events: none; }
  .combo { display: flex; height: 22px; }
  .combo input { width: 95px; border: 1px solid #c4c6ca; background: #f7f7f7; padding: 0 3px; color: #838383; }
  .combo button { width: 21px; border: 1px solid #b4b6ba; background: #f7f7f7; display: grid; place-items: center; margin-left: auto; }
  hr { border: 0; height: 1px; background: #9a9a9a; margin: 1px -2px 3px; }

  main { flex: 1; min-height: 0; display: flex; }
  aside { width: 247px; flex: none; display: flex; flex-direction: column; background: #f4f4f4; border: 1px solid #c3c6d2; border-top: 0; margin-right: 3px; }
  .title { display: flex; align-items: center; height: 26px; padding: 0 6px 0 4px; gap: 12px; background: linear-gradient(90deg, #f2f2f2, #fff 60%, #f4f4f4); border-bottom: 1px solid #d0d2d8; }
  .title h1 { flex: 1; }
  .catalog { display: flex; height: 24px; gap: 4px; align-items: center; background: #fff; }
  .pick.cat { width: 220px; height: 24px; }
  .bar { display: flex; align-items: center; height: 22px; flex: none; padding: 0 3px; background: #fff; gap: 6px; }
  .bar .sign { width: 9px; line-height: 14px; }
  .bar input { flex: 1; min-width: 0; height: 20px; border: 1px solid #abadb3; background: #fff; }
  .lower { height: 23px; gap: 5px; }
  .lower .sign { width: 11px; }
  .treebox { border-top: 2px solid #a8abb4; height: 304px; flex: none; display: flex; flex-direction: column; background: #fff; border-bottom: 2px solid #d4d4d6; border-right: 1px solid #8b8e98; margin-right: 1px; }
  .treerow { flex: 1; min-height: 0; display: flex; }
  .tree { flex: 1; min-width: 0; overflow: hidden; }
  .tree li { display: flex; align-items: center; height: 18px; white-space: nowrap; padding-left: 8px; gap: 5px; }
  .tree li > span { line-height: 16px; }
  .tree li.leaf { gap: 1px; }
  .tree .lv1 { padding-left: 24px; }
  .tree .lv2 { padding-left: 40px; }
  .tree .lv3 { padding-left: 68px; }
  .tree .lv1.leaf { padding-left: 36px; }
  .tree :global(svg) { margin-left: -2px; }
  .selected { background: #0078d7; color: #fff; }
  .exp { position: relative; width: 9px; height: 9px; flex: none; border: 1px solid #98a1ac; border-radius: 1px; background: linear-gradient(90deg, #222, #222) center / 5px 1px no-repeat, #f1f1ee; }
  .exp.closed { background: linear-gradient(#222, #222) center / 5px 1px no-repeat, linear-gradient(#222, #222) center / 1px 5px no-repeat, #f1f1ee; }
  .noexp { width: 9px; flex: none; }
  .vbar { width: 17px; flex: none; background: #f0f0f0; color: #888; display: flex; flex-direction: column; }
  .vbar button, .hbar button { width: 17px; height: 17px; flex: none; display: grid; place-items: center; }
  .thumb { background: #cdcdcd; display: block; }
  .vbar .thumb { height: 104px; }
  .vbar button:last-child { margin-top: auto; }
  .hbar { display: flex; height: 17px; flex: none; background: #f0f0f0; color: #888; padding-left: 2px; }
  .tb { padding-right: 17px; }
  .hbar button:last-child { margin-left: auto; }
  .tb .thumb { width: 160px; }
  .ib .thumb { width: 85px; }
  .items { flex: 1; min-height: 0; display: flex; flex-direction: column; background: #fff; border: 1px solid #8b8e98; border-left: 0; margin-right: 1px; overflow: hidden; }
  table { border-collapse: collapse; table-layout: fixed; width: 100%; }
  th, td { padding: 0; text-align: left; font-weight: 400; white-space: nowrap; overflow: hidden; }
  th { height: 21px; border-bottom: 1px solid #dcdcdc; padding-left: 4px; background: linear-gradient(#fff, #f4f4f6); }
  .c1 { width: 208px; }
  th.c1 { text-align: center; border-right: 1px solid #dcdcdc; padding: 0 0 0 4px; }
  td { height: 20px; }
  .item td { height: 22px; }
  .cell { display: flex; align-items: center; overflow: hidden; }
  .root { padding-left: 8px; gap: 3px; }
  .root > span { padding-left: 2px; }
  .sub { margin-left: 36px; width: 166px; gap: 1px; }
  .pct { padding-left: 5px; }
  .items .hbar { margin-top: auto; }
  .grip { height: 6px; flex: none; display: flex; gap: 2px; align-items: center; justify-content: center; }
  .grip i { width: 2px; height: 2px; background: #777; }
  .nav { flex: none; height: 168px; border-top: 1px solid #c3c6d2; }
  .nav button { display: flex; width: 100%; height: 28px; align-items: center; gap: 8px; padding-left: 4px; border-bottom: 1px solid #c3c6d2; font-weight: 700; }
  .nav .current { background: #f0ffff; }

  .work { flex: 1; min-width: 0; display: flex; flex-direction: column; background: #fff; }
  .canvas { flex: 1; min-height: 0; overflow: hidden; }
  .canvas > svg { display: block; }
  .grid line { stroke: #dedede; stroke-width: 1.3; stroke-dasharray: 6 3; }
  .grid .axis { stroke: #777; stroke-width: 1; stroke-dasharray: 3 2; }
  .weave line { stroke: #d9d8d6; stroke-width: 2; }
  .walls rect { fill: none; }
  .seam { stroke: #1414e6; stroke-width: 1.3; stroke-dasharray: 12 6; }
  .marks path { fill: none; stroke: #111; }
  .names { font: 11px "DejaVu Sans", sans-serif; fill: #111; }
  .b { font-weight: 700; }
  .pointer { fill: #ff4444; stroke: #ff4444; filter: drop-shadow(2px 3px 2px #0006); }
  .pointer path { stroke: none; }
  .pointer line { stroke-width: 10; stroke-linecap: round; }

  .floors { flex: none; height: 19px; display: flex; align-items: center; padding-left: 4px; gap: 8px; }
  .floors .floor { font-weight: 700; color: #00008b; height: 19px; padding: 2px 6px 0 5px; border-right: 1px solid #999; }
  .floors button:nth-child(2) { margin: 0 -1px 0 -2px; }
  .right { margin-left: auto; display: flex; align-items: center; gap: 3px; }
  .cb { width: 132px; height: 19px; border: 1px solid #eee; border-left: 3px solid #d0d0d0; background: #fff; padding: 0; }
  .cb button { background: #f0f0f0; }
  .hbar.cb button { margin-left: 0; }
  .cb .thumb { width: 23px; margin-left: 47px; }
  .status { flex: none; height: 20px; background: #f4f4f4; border-bottom: 2px solid #d2d2d2; line-height: 18px; padding-left: 1px; color: #333; }
  .roll { flex: none; height: 151px; display: flex; flex-direction: column; font: 10px/17px "DejaVu Sans", sans-serif; overflow: hidden; padding-top: 1px; }
  .roll p { padding-left: 5px; white-space: nowrap; flex: none; }
  .roll .totals { display: flex; gap: 11px; }
  .strip { flex: 1; min-height: 0; display: block; margin-top: 1px; }
  .rb { padding-left: 0; }
  .rb .thumb { width: 95%; }
  footer { flex: none; height: 4px; background: #171212; }
</style>
